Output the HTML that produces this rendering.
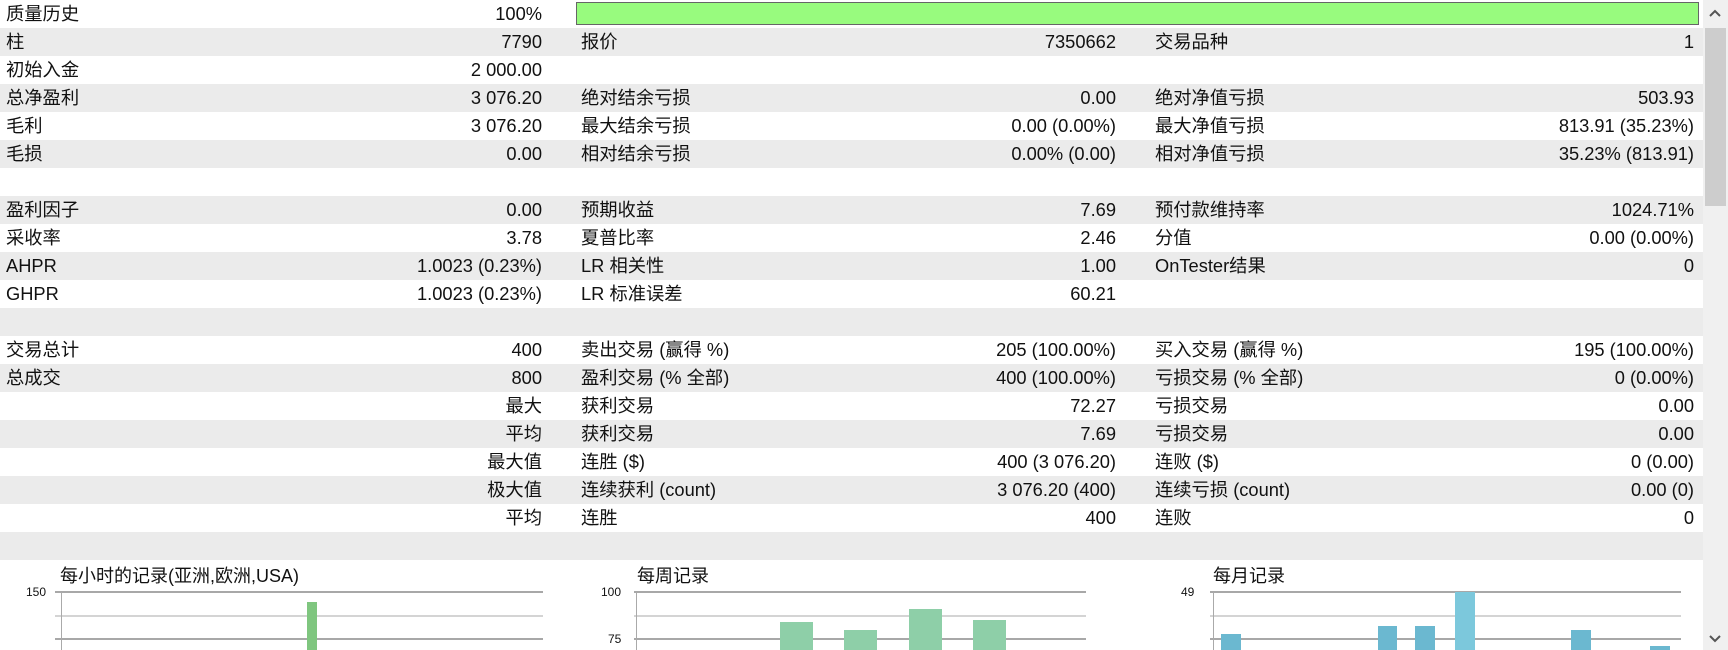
<!DOCTYPE html>
<html><head><meta charset="utf-8"><style>
body{margin:0;width:1728px;height:650px;overflow:hidden;background:#fff;font-family:"Liberation Sans","Noto Sans CJK SC",sans-serif;font-size:18.3px;color:#111;position:relative}
.r{position:absolute;left:0;width:1703px;height:28px;line-height:28px}
.g{background:#ebebeb}
.r span{position:absolute;white-space:nowrap}
.l1{left:6px}.v1{right:1161px}.l2{left:581px}.v2{right:587px}.l3{left:1155px}.v3{right:9px}
.sb{position:absolute;left:1703px;top:0;width:25px;height:650px;background:#f0f0f0}
.th{position:absolute;left:1705px;top:28px;width:21px;height:178px;background:#cdcdcd}
.ct{position:absolute;font-size:18px;top:562px}
.ax{position:absolute;font-size:12px}
.gl{position:absolute;height:2px;background:#a8a8a8}
.gl2{position:absolute;height:2px;background:#d4d4d4}
.b{position:absolute;bottom:0}
</style></head><body>
<div class="r" style="top:0"><span class="l1">质量历史</span><span class="v1">100%</span></div>
<div style="position:absolute;left:576px;top:2px;width:1121px;height:21px;background:#98fb7e;border:1px solid #666"></div>
<div class="r g" style="top:28px"><span class="l1">柱</span><span class="v1">7790</span><span class="l2">报价</span><span class="v2">7350662</span><span class="l3">交易品种</span><span class="v3">1</span></div>
<div class="r" style="top:56px"><span class="l1">初始入金</span><span class="v1">2 000.00</span></div>
<div class="r g" style="top:84px"><span class="l1">总净盈利</span><span class="v1">3 076.20</span><span class="l2">绝对结余亏损</span><span class="v2">0.00</span><span class="l3">绝对净值亏损</span><span class="v3">503.93</span></div>
<div class="r" style="top:112px"><span class="l1">毛利</span><span class="v1">3 076.20</span><span class="l2">最大结余亏损</span><span class="v2">0.00 (0.00%)</span><span class="l3">最大净值亏损</span><span class="v3">813.91 (35.23%)</span></div>
<div class="r g" style="top:140px"><span class="l1">毛损</span><span class="v1">0.00</span><span class="l2">相对结余亏损</span><span class="v2">0.00% (0.00)</span><span class="l3">相对净值亏损</span><span class="v3">35.23% (813.91)</span></div>
<div class="r" style="top:168px"></div>
<div class="r g" style="top:196px"><span class="l1">盈利因子</span><span class="v1">0.00</span><span class="l2">预期收益</span><span class="v2">7.69</span><span class="l3">预付款维持率</span><span class="v3">1024.71%</span></div>
<div class="r" style="top:224px"><span class="l1">采收率</span><span class="v1">3.78</span><span class="l2">夏普比率</span><span class="v2">2.46</span><span class="l3">分值</span><span class="v3">0.00 (0.00%)</span></div>
<div class="r g" style="top:252px"><span class="l1">AHPR</span><span class="v1">1.0023 (0.23%)</span><span class="l2">LR 相关性</span><span class="v2">1.00</span><span class="l3">OnTester结果</span><span class="v3">0</span></div>
<div class="r" style="top:280px"><span class="l1">GHPR</span><span class="v1">1.0023 (0.23%)</span><span class="l2">LR 标准误差</span><span class="v2">60.21</span></div>
<div class="r g" style="top:308px"></div>
<div class="r" style="top:336px"><span class="l1">交易总计</span><span class="v1">400</span><span class="l2">卖出交易 (赢得 %)</span><span class="v2">205 (100.00%)</span><span class="l3">买入交易 (赢得 %)</span><span class="v3">195 (100.00%)</span></div>
<div class="r g" style="top:364px"><span class="l1">总成交</span><span class="v1">800</span><span class="l2">盈利交易 (% 全部)</span><span class="v2">400 (100.00%)</span><span class="l3">亏损交易 (% 全部)</span><span class="v3">0 (0.00%)</span></div>
<div class="r" style="top:392px"><span class="v1">最大</span><span class="l2">获利交易</span><span class="v2">72.27</span><span class="l3">亏损交易</span><span class="v3">0.00</span></div>
<div class="r g" style="top:420px"><span class="v1">平均</span><span class="l2">获利交易</span><span class="v2">7.69</span><span class="l3">亏损交易</span><span class="v3">0.00</span></div>
<div class="r" style="top:448px"><span class="v1">最大值</span><span class="l2">连胜 ($)</span><span class="v2">400 (3 076.20)</span><span class="l3">连败 ($)</span><span class="v3">0 (0.00)</span></div>
<div class="r g" style="top:476px"><span class="v1">极大值</span><span class="l2">连续获利 (count)</span><span class="v2">3 076.20 (400)</span><span class="l3">连续亏损 (count)</span><span class="v3">0.00 (0)</span></div>
<div class="r" style="top:504px"><span class="v1">平均</span><span class="l2">连胜</span><span class="v2">400</span><span class="l3">连败</span><span class="v3">0</span></div>
<div class="r g" style="top:532px"></div>

<div class="ct" style="left:60px">每小时的记录(亚洲,欧洲,USA)</div>
<div class="ct" style="left:637px">每周记录</div>
<div class="ct" style="left:1213px">每月记录</div>
<div class="ax" style="left:26px;top:585px">150</div>
<div class="ax" style="left:601px;top:585px">100</div>
<div class="ax" style="left:608px;top:632px">75</div>
<div class="ax" style="left:1181px;top:585px">49</div>
<div class="gl" style="left:55px;width:488px;top:591px"></div><div class="gl2" style="left:55px;width:488px;top:615px"></div><div class="gl" style="left:55px;width:488px;top:638px"></div>
<div class="gl" style="left:634px;width:452px;top:591px"></div><div class="gl2" style="left:634px;width:452px;top:615px"></div><div class="gl" style="left:634px;width:452px;top:638px"></div>
<div class="gl" style="left:1210px;width:471px;top:591px"></div><div class="gl2" style="left:1210px;width:471px;top:615px"></div><div class="gl" style="left:1210px;width:471px;top:638px"></div>
<div style="position:absolute;left:61px;top:592px;width:1px;height:58px;background:#aaa"></div>
<div style="position:absolute;left:636px;top:592px;width:1px;height:58px;background:#aaa"></div>
<div style="position:absolute;left:1213px;top:592px;width:1px;height:58px;background:#aaa"></div>
<div style="position:absolute;left:0;top:0;width:1703px;height:650px">
<div class="b" style="left:307px;width:10px;top:602px;background:#7fc67f"></div>
<div class="b" style="left:780px;width:33px;top:622px;background:#8ecfa8"></div>
<div class="b" style="left:844px;width:33px;top:630px;background:#8ecfa8"></div>
<div class="b" style="left:909px;width:33px;top:609px;background:#8ecfa8"></div>
<div class="b" style="left:973px;width:33px;top:620px;background:#8ecfa8"></div>
<div class="b" style="left:1221px;width:20px;top:634px;background:#6bb8d0"></div>
<div class="b" style="left:1378px;width:19px;top:626px;background:#6bb8d0"></div>
<div class="b" style="left:1415px;width:20px;top:626px;background:#6bb8d0"></div>
<div class="b" style="left:1455px;width:20px;top:592px;background:#7cc8dc"></div>
<div class="b" style="left:1571px;width:20px;top:630px;background:#6bb8d0"></div>
<div class="b" style="left:1650px;width:20px;top:646px;background:#6bb8d0"></div>
</div>
<div class="sb"></div><div class="th"></div>
<svg style="position:absolute;left:1708px;top:8px" width="14" height="10"><path d="M2 8 L7 3 L12 8" fill="none" stroke="#555" stroke-width="2"/></svg>
<svg style="position:absolute;left:1708px;top:634px" width="14" height="10"><path d="M2 2 L7 7 L12 2" fill="none" stroke="#555" stroke-width="2"/></svg>
</body></html>
